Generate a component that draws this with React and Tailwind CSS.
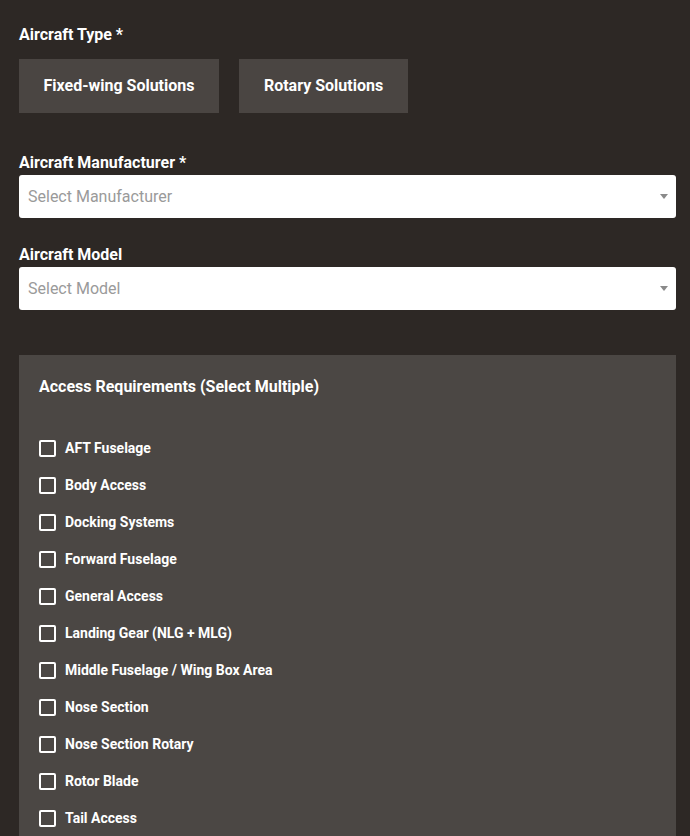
import { useState } from "react";

const accessOptions = [
  "AFT Fuselage",
  "Body Access",
  "Docking Systems",
  "Forward Fuselage",
  "General Access",
  "Landing Gear (NLG + MLG)",
  "Middle Fuselage / Wing Box Area",
  "Nose Section",
  "Nose Section Rotary",
  "Rotor Blade",
  "Tail Access",
];

const SelectBox = ({ placeholder }) => (
  <div className="relative h-[43px] w-full rounded-[3px] bg-white flex items-center pl-[9px]">
    <span className="text-[16px] text-[#9a9a9a]">{placeholder}</span>
    <span className="absolute right-[8px] top-[19px] w-0 h-0 border-l-[4px] border-r-[4px] border-t-[5px] border-l-transparent border-r-transparent border-t-[#8a8a8a]" />
  </div>
);

function App() {
  const [checked, setChecked] = useState({});

  const toggle = (name) => setChecked((c) => ({ ...c, [name]: !c[name] }));

  return (
    <div className="min-h-screen w-[690px] h-[836px] overflow-hidden bg-[#2d2825] text-white font-['Roboto',sans-serif] pl-[19px] pr-[14px] pt-[25px]">
      {/* aircraft type */}
      <div className="text-[16px] font-bold leading-[20px]">Aircraft Type *</div>
      <div className="flex gap-[20px] mt-[14px]">
        <button className="h-[54px] w-[200px] bg-[#4a4542] text-[16px] font-bold">Fixed-wing Solutions</button>
        <button className="h-[54px] w-[169px] bg-[#4a4542] text-[16px] font-bold">Rotary Solutions</button>
      </div>

      {/* manufacturer */}
      <div className="text-[16px] font-bold leading-[20px] mt-[40px] mb-[2px]">Aircraft Manufacturer *</div>
      <SelectBox placeholder="Select Manufacturer" />

      {/* model */}
      <div className="text-[16px] font-bold leading-[20px] mt-[27px] mb-[2px]">Aircraft Model</div>
      <SelectBox placeholder="Select Model" />

      {/* access requirements */}
      <div className="mt-[45px] bg-[#4b4744] pl-[20px] pt-[21px] pb-[20px]">
        <div className="text-[16px] font-bold leading-[22px]">Access Requirements (Select Multiple)</div>
        <div className="mt-[32px] flex flex-col">
          {accessOptions.map((name) => (
            <label key={name} className="h-[37px] flex items-center gap-[9px] cursor-pointer" onClick={() => toggle(name)}>
              <span className="w-[17px] h-[17px] border-2 border-white rounded-[2px] flex items-center justify-center text-[11px] leading-none">
                {checked[name] ? "✓" : ""}
              </span>
              <span className="text-[14px] font-bold">{name}</span>
            </label>
          ))}
        </div>
      </div>
    </div>
  );
}

export default App;
